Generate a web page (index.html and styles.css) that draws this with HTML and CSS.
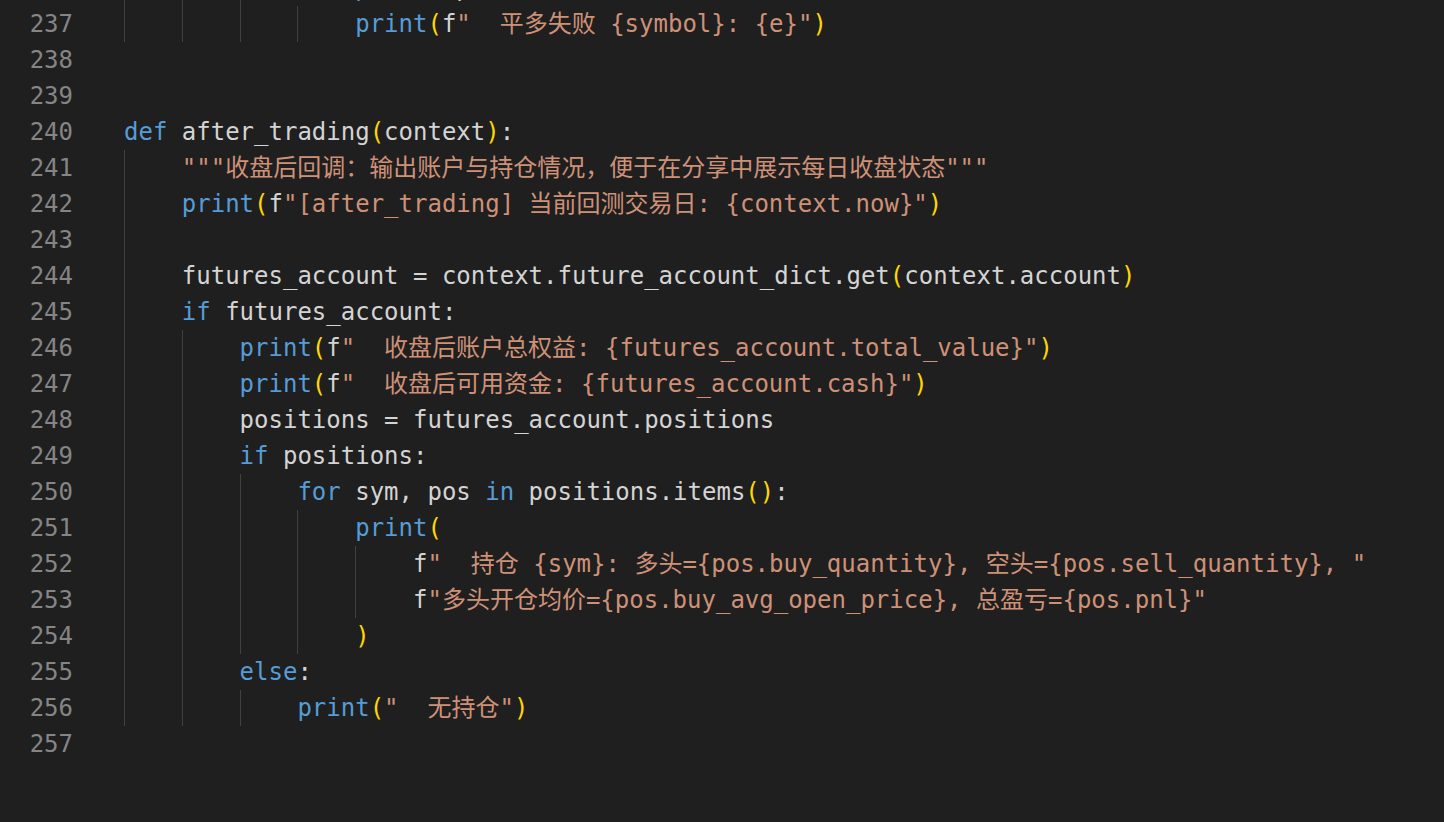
FILE: index.html
```html
<!DOCTYPE html>
<html lang="zh-CN">
<head>
<meta charset="utf-8">
<title>after_trading.py</title>
<link rel="stylesheet" href="styles.css">
</head>
<body>
<div class="editor">
<div class="line"><span class="ln">236</span><span class="code"><i class="g"></i><i class="g"></i><i class="g"></i><span class="k">except</span> Exception <span class="k">as</span> e:</span></div>
<div class="line"><span class="ln">237</span><span class="code"><i class="g"></i><i class="g"></i><i class="g"></i><i class="g"></i><span class="k">print</span><span class="b">(</span>f<span class="s">"  平多失败 {symbol}: {e}"</span><span class="b">)</span></span></div>
<div class="line"><span class="ln">238</span><span class="code"></span></div>
<div class="line"><span class="ln">239</span><span class="code"></span></div>
<div class="line"><span class="ln">240</span><span class="code"><span class="k">def</span> after_trading<span class="b">(</span>context<span class="b">)</span>:</span></div>
<div class="line"><span class="ln">241</span><span class="code"><i class="g"></i><span class="s">"""收盘后回调：输出账户与持仓情况，便于在分享中展示每日收盘状态"""</span></span></div>
<div class="line"><span class="ln">242</span><span class="code"><i class="g"></i><span class="k">print</span><span class="b">(</span>f<span class="s">"[after_trading] 当前回测交易日: {context.now}"</span><span class="b">)</span></span></div>
<div class="line"><span class="ln">243</span><span class="code"><i class="g"></i></span></div>
<div class="line"><span class="ln">244</span><span class="code"><i class="g"></i>futures_account = context.future_account_dict.get<span class="b">(</span>context.account<span class="b">)</span></span></div>
<div class="line"><span class="ln">245</span><span class="code"><i class="g"></i><span class="k">if</span> futures_account:</span></div>
<div class="line"><span class="ln">246</span><span class="code"><i class="g"></i><i class="g"></i><span class="k">print</span><span class="b">(</span>f<span class="s">"  收盘后账户总权益: {futures_account.total_value}"</span><span class="b">)</span></span></div>
<div class="line"><span class="ln">247</span><span class="code"><i class="g"></i><i class="g"></i><span class="k">print</span><span class="b">(</span>f<span class="s">"  收盘后可用资金: {futures_account.cash}"</span><span class="b">)</span></span></div>
<div class="line"><span class="ln">248</span><span class="code"><i class="g"></i><i class="g"></i>positions = futures_account.positions</span></div>
<div class="line"><span class="ln">249</span><span class="code"><i class="g"></i><i class="g"></i><span class="k">if</span> positions:</span></div>
<div class="line"><span class="ln">250</span><span class="code"><i class="g"></i><i class="g"></i><i class="g"></i><span class="k">for</span> sym, pos <span class="k">in</span> positions.items<span class="b">()</span>:</span></div>
<div class="line"><span class="ln">251</span><span class="code"><i class="g"></i><i class="g"></i><i class="g"></i><i class="g"></i><span class="k">print</span><span class="b">(</span></span></div>
<div class="line"><span class="ln">252</span><span class="code"><i class="g"></i><i class="g"></i><i class="g"></i><i class="g"></i><i class="g"></i>f<span class="s">"  持仓 {sym}: 多头={pos.buy_quantity}, 空头={pos.sell_quantity}, "</span></span></div>
<div class="line"><span class="ln">253</span><span class="code"><i class="g"></i><i class="g"></i><i class="g"></i><i class="g"></i><i class="g"></i>f<span class="s">"多头开仓均价={pos.buy_avg_open_price}, 总盈亏={pos.pnl}"</span></span></div>
<div class="line"><span class="ln">254</span><span class="code"><i class="g"></i><i class="g"></i><i class="g"></i><i class="g"></i><span class="b">)</span></span></div>
<div class="line"><span class="ln">255</span><span class="code"><i class="g"></i><i class="g"></i><span class="k">else</span>:</span></div>
<div class="line"><span class="ln">256</span><span class="code"><i class="g"></i><i class="g"></i><i class="g"></i><span class="k">print</span><span class="b">(</span><span class="s">"  无持仓"</span><span class="b">)</span></span></div>
<div class="line"><span class="ln">257</span><span class="code"></span></div>
</div>
</body>
</html>
```

FILE: styles.css
```css
html, body {
  margin: 0;
  padding: 0;
  background: #1f1f1f;
  overflow: hidden;
}

.editor {
  margin-top: -30px;
  font-family: "DejaVu Sans Mono", "Noto Sans CJK SC", monospace;
  font-size: 24px;
  line-height: 36px;
  color: #d4d4d4;
}

.line {
  display: flex;
  height: 36px;
}

.ln {
  flex: none;
  width: 73px;
  text-align: right;
  color: #858585;
}

.code {
  margin-left: 51px;
  white-space: pre;
  height: 36px;
}

.g {
  display: inline-block;
  width: 4ch;
  height: 36px;
  vertical-align: top;
  background: linear-gradient(#404040, #404040) 0 0 / 1px 100% no-repeat;
}

.k { color: #569cd6; }
.s { color: #ce9178; }
.b { color: #ffd700; }
```
